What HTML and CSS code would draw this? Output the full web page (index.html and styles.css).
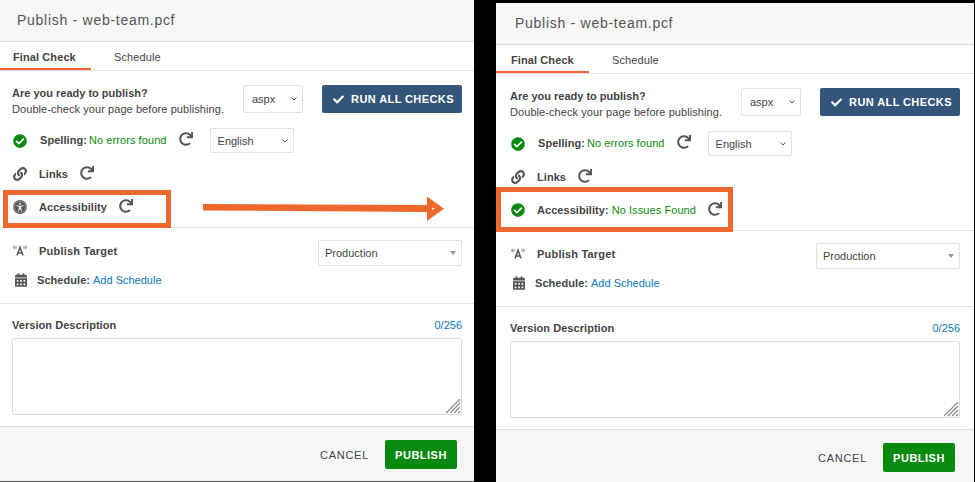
FILE: index.html
```html
<!doctype html>
<html lang="en">
<head>
	<meta charset="UTF-8">
	<title>Publish - web-team.pcf</title>
	<link rel="stylesheet" href="styles.css">
</head>
<body>
	<svg class="defs" width="0" height="0">
		<symbol id="i-ok" viewBox="0 0 512 512"><path d="M504 256c0 136.967-111.033 248-248 248S8 392.967 8 256 119.033 8 256 8s248 111.033 248 248zM227.314 387.314l184-184c6.248-6.248 6.248-16.379 0-22.627l-22.627-22.627c-6.248-6.249-16.379-6.249-22.628 0L216 308.118l-70.059-70.059c-6.248-6.248-16.379-6.248-22.628 0l-22.627 22.627c-6.248 6.248-6.248 16.379 0 22.627l104 104c6.249 6.249 16.379 6.249 22.628.001z"/></symbol>
		<symbol id="i-redo" viewBox="0 0 512 512"><path d="M500.33 0h-47.41a12 12 0 0 0-12 12.57l4 82.76A247.42 247.42 0 0 0 256 8C119.34 8 7.9 119.53 8 256.19 8.1 393.07 119.1 504 256 504a247.1 247.1 0 0 0 166.18-63.91 12 12 0 0 0 .48-17.43l-34-34a12 12 0 0 0-16.38-.55A176 176 0 1 1 402.1 157.8l-101.53-4.87a12 12 0 0 0-12.57 12v47.41a12 12 0 0 0 12 12h200.33a12 12 0 0 0 12-12V12a12 12 0 0 0-12-12z"/></symbol>
		<symbol id="i-check" viewBox="0 0 512 512"><path d="M173.898 439.404l-166.4-166.4c-9.997-9.997-9.997-26.206 0-36.204l36.203-36.204c9.997-9.998 26.207-9.998 36.204 0L192 312.69 432.095 72.596c9.997-9.997 26.207-9.997 36.204 0l36.203 36.204c9.997 9.997 9.997 26.206 0 36.204l-294.4 294.401c-9.998 9.997-26.207 9.997-36.204-.001z"/></symbol>
		<symbol id="i-link" viewBox="0 0 512 512"><path d="M326.612 185.391c59.747 59.809 58.927 155.698.36 214.59-.11.12-.24.25-.36.37l-67.2 67.2c-59.27 59.27-155.699 59.262-214.96 0-59.27-59.26-59.27-155.7 0-214.96l37.106-37.106c9.84-9.84 26.786-3.3 27.294 10.606.648 17.722 3.826 35.527 9.69 52.721 1.986 5.822.567 12.262-3.783 16.612l-13.087 13.087c-28.026 28.026-28.905 73.66-1.155 101.96 28.024 28.579 74.086 28.749 102.325.51l67.2-67.19c28.191-28.191 28.073-73.757 0-101.83-3.701-3.694-7.429-6.564-10.341-8.569a16.037 16.037 0 0 1-6.947-12.606c-.396-10.567 3.348-21.456 11.698-29.806l21.054-21.055c5.521-5.521 14.182-6.199 20.584-1.731a152.482 152.482 0 0 1 20.522 17.197zM467.547 44.449c-59.261-59.262-155.69-59.27-214.96 0l-67.2 67.2c-.12.12-.25.25-.36.37-58.566 58.892-59.387 154.781.36 214.59a152.454 152.454 0 0 0 20.521 17.196c6.402 4.468 15.064 3.789 20.584-1.731l21.054-21.055c8.35-8.35 12.094-19.239 11.698-29.806a16.037 16.037 0 0 0-6.947-12.606c-2.912-2.005-6.64-4.875-10.341-8.569-28.073-28.073-28.191-73.639 0-101.83l67.2-67.19c28.239-28.239 74.3-28.069 102.325.51 27.75 28.3 26.872 73.934-1.155 101.96l-13.087 13.087c-4.35 4.35-5.769 10.79-3.783 16.612 5.864 17.194 9.042 34.999 9.69 52.721.509 13.906 17.454 20.446 27.294 10.606l37.106-37.106c59.271-59.259 59.271-155.699.001-214.959z"/></symbol>
		<symbol id="i-cal" viewBox="0 0 448 512"><path d="M0 464c0 26.5 21.5 48 48 48h352c26.5 0 48-21.5 48-48V192H0v272zm320-196c0-6.6 5.4-12 12-12h40c6.6 0 12 5.4 12 12v40c0 6.6-5.4 12-12 12h-40c-6.6 0-12-5.4-12-12v-40zm0 128c0-6.6 5.4-12 12-12h40c6.6 0 12 5.4 12 12v40c0 6.6-5.4 12-12 12h-40c-6.6 0-12-5.4-12-12v-40zM192 268c0-6.6 5.4-12 12-12h40c6.6 0 12 5.4 12 12v40c0 6.6-5.4 12-12 12h-40c-6.6 0-12-5.4-12-12v-40zm0 128c0-6.6 5.4-12 12-12h40c6.6 0 12 5.4 12 12v40c0 6.6-5.4 12-12 12h-40c-6.6 0-12-5.4-12-12v-40zM64 268c0-6.6 5.4-12 12-12h40c6.6 0 12 5.4 12 12v40c0 6.6-5.4 12-12 12H76c-6.6 0-12-5.4-12-12v-40zm0 128c0-6.6 5.4-12 12-12h40c6.6 0 12 5.4 12 12v40c0 6.6-5.4 12-12 12H76c-6.6 0-12-5.4-12-12v-40zM400 64h-48V16c0-8.8-7.2-16-16-16h-32c-8.8 0-16 7.2-16 16v48H160V16c0-8.8-7.2-16-16-16h-32c-8.8 0-16 7.2-16 16v48H48C21.5 64 0 85.5 0 112v48h448v-48c0-26.5-21.5-48-48-48z"/></symbol>
		<symbol id="i-access" viewBox="0 0 14 14"><circle cx="7" cy="7" r="6.900"/><circle cx="7" cy="7" r="5.800" fill="none" stroke="#bbb" stroke-width=".5"/><path fill="#e8e8e8" d="M7 2.700a1 1 0 1 1 0 2 1 1 0 0 1 0-2zM3.500 5.200l-.2.700 2.500.8v1.500l-.9 3 .7.200L7 8.900l1.400 2.500.7-.2-.9-3V6.700l2.500-.8-.2-.7c-2.400.6-4.600.6-7 0z"/></symbol>
		<symbol id="i-target" viewBox="0 0 14 14"><path d="M4 11.500 7 3.200l3 8.300M5.100 9h3.800" fill="none" stroke="currentColor" stroke-width="1.500"/><path d="M1.700 1.800C.7 2.800.7 4.200 1.700 5.200M3.200 2.500C2.800 3 2.800 3.900 3.200 4.400M12.300 1.800c1 1 1 2.400 0 3.400M10.800 2.500c.4.500.4 1.400 0 1.900" fill="none" stroke="currentColor" stroke-width="1"/></symbol>
	</svg>

	<section class="panel panel-left">
		<header class="panel-head">Publish - web-team.pcf</header>
		<nav class="tabs">
			<a class="tab active">Final Check</a>
			<a class="tab">Schedule</a>
		</nav>
		<div class="checks">
			<div class="intro">
				<p class="intro-text"><b>Are you ready to publish?</b><br>Double-check your page before publishing.</p>
				<select class="pick pick-ext"><option>aspx</option></select>
				<button class="run"><svg class="ico-run"><use href="#i-check"/></svg>RUN ALL CHECKS</button>
			</div>
			<div class="check-row row-spell">
				<svg class="ico ok"><use href="#i-ok"/></svg>
				<span class="label">Spelling:</span>
				<span class="good">No errors found</span>
				<svg class="redo"><use href="#i-redo"/></svg>
				<select class="pick pick-lang"><option>English</option></select>
			</div>
			<div class="check-row">
				<svg class="ico"><use href="#i-link"/></svg>
				<span class="label">Links</span>
				<svg class="redo"><use href="#i-redo"/></svg>
			</div>
			<div class="check-row">
				<svg class="ico"><use href="#i-access"/></svg>
				<span class="label">Accessibility</span>
				<svg class="redo"><use href="#i-redo"/></svg>
			</div>
		</div>
		<div class="target">
			<div class="target-row">
				<svg class="ico"><use href="#i-target"/></svg>
				<span class="label">Publish Target</span>
				<div class="fake-select">Production</div>
			</div>
			<div class="sched-row">
				<svg class="ico-cal"><use href="#i-cal"/></svg>
				<span class="label">Schedule:</span>
				<a class="blue">Add Schedule</a>
			</div>
		</div>
		<div class="version">
			<div class="version-head"><span class="label">Version Description</span><span class="blue">0/256</span></div>
			<div class="desc-wrap">
				<textarea class="desc"></textarea>
				<svg class="grip" viewBox="0 0 15 15"><path d="M0 14 14 0M4 14 14 4M8 14l6-6M12 14l2-2" stroke="#888" stroke-width="1.200"/></svg>
			</div>
		</div>
		<footer class="panel-foot">
			<a class="cancel">CANCEL</a>
			<button class="publish">PUBLISH</button>
		</footer>
		<div class="callout callout-left"></div>
		<svg class="arrow" viewBox="0 0 242 26"><path d="M0 8 224 9V.5L241 12.700 224 25V16L0 14.500z" fill="#ee672c"/><path d="M229 11.500l3 1.300-3 1.200z" fill="#fff"/></svg>
	</section>

	<section class="panel panel-right">
		<header class="panel-head">Publish - web-team.pcf</header>
		<nav class="tabs">
			<a class="tab active">Final Check</a>
			<a class="tab">Schedule</a>
		</nav>
		<div class="checks">
			<div class="intro">
				<p class="intro-text"><b>Are you ready to publish?</b><br>Double-check your page before publishing.</p>
				<select class="pick pick-ext"><option>aspx</option></select>
				<button class="run"><svg class="ico-run"><use href="#i-check"/></svg>RUN ALL CHECKS</button>
			</div>
			<div class="check-row row-spell">
				<svg class="ico ok"><use href="#i-ok"/></svg>
				<span class="label">Spelling:</span>
				<span class="good">No errors found</span>
				<svg class="redo"><use href="#i-redo"/></svg>
				<select class="pick pick-lang"><option>English</option></select>
			</div>
			<div class="check-row">
				<svg class="ico"><use href="#i-link"/></svg>
				<span class="label">Links</span>
				<svg class="redo"><use href="#i-redo"/></svg>
			</div>
			<div class="check-row">
				<svg class="ico ok"><use href="#i-ok"/></svg>
				<span class="label">Accessibility:</span>
				<span class="good">No Issues Found</span>
				<svg class="redo"><use href="#i-redo"/></svg>
			</div>
		</div>
		<div class="target">
			<div class="target-row">
				<svg class="ico"><use href="#i-target"/></svg>
				<span class="label">Publish Target</span>
				<div class="fake-select">Production</div>
			</div>
			<div class="sched-row">
				<svg class="ico-cal"><use href="#i-cal"/></svg>
				<span class="label">Schedule:</span>
				<a class="blue">Add Schedule</a>
			</div>
		</div>
		<div class="version">
			<div class="version-head"><span class="label">Version Description</span><span class="blue">0/256</span></div>
			<div class="desc-wrap">
				<textarea class="desc"></textarea>
				<svg class="grip" viewBox="0 0 15 15"><path d="M0 14 14 0M4 14 14 4M8 14l6-6M12 14l2-2" stroke="#888" stroke-width="1.200"/></svg>
			</div>
		</div>
		<footer class="panel-foot">
			<a class="cancel">CANCEL</a>
			<button class="publish">PUBLISH</button>
		</footer>
		<div class="callout callout-right"></div>
	</section>
</body>
</html>
```

FILE: styles.css
```css
html, body{ margin: 0; height: 482px; overflow: hidden;}
body{ display: flex; background: #000; font-family: "Liberation Sans", Arial, sans-serif; font-size: 11px; color: #444;}
.defs{ position: absolute;}
p{ margin: 0;}

.panel{ position: relative; flex: none; width: 474px; height: 482px; background: #fff;}
.panel-left{ --pad: 12px; border-bottom: 1px solid #555; box-sizing: border-box;}
.panel-right{ --pad: 14px; width: 478px; height: 479px; margin: 3px 0 0 22px;}

.panel-head{ height: 41px; padding-left: calc(var(--pad) + 5px); line-height: 41px; background: #f7f7f7; border-bottom: 1px solid #ddd; font-size: 14px; letter-spacing: .72px; color: #555;}

.tabs{ display: flex; height: 28px; border-bottom: 1px solid #e0e0e0;}
.tab{ height: 28px; line-height: 30px; box-sizing: border-box; font-size: 11px; letter-spacing: .1px;}
.tab.active{ width: calc(var(--pad) + 79px); padding-left: calc(var(--pad) + 1px); border-bottom: 2px solid #f4623a; font-weight: bold;}
.tab + .tab{ margin-left: 23px;}

.checks{ height: 157px; padding: 14px var(--pad) 0; border-bottom: 1px solid #e0e0e0; box-sizing: border-box;}
.intro{ display: flex; height: 28px; margin-bottom: 15px;}
.intro-text{ width: 231px; line-height: 16px; letter-spacing: .07px;}
.intro-text b{ letter-spacing: 0;}

.pick{ appearance: none; font-family: "Liberation Sans", Arial, sans-serif; font-size: 11px; color: #444; border: 1px solid #e0e0e0; border-radius: 2px; background: #fff url("data:image/svg+xml,%3Csvg xmlns='http://www.w3.org/2000/svg' width='6' height='4'%3E%3Cpath d='M.5.5 3 3 5.500.5' fill='none' stroke='%23555'/%3E%3C/svg%3E") no-repeat right 5px center;}
.pick-ext{ width: 60px; height: 28px; padding-left: 8px;}
.pick-lang{ align-self: flex-start; width: 84px; height: 25px; margin-left: 17px; padding-left: 7px;}

.run{ display: flex; align-items: center; justify-content: center; width: 140px; height: 28px; margin-left: 19px; padding: 0 0 0 3px; border: 0; border-radius: 2px; background: #34557a; color: #fff; font-family: inherit; font-size: 11px; font-weight: bold; letter-spacing: .4px;}
.ico-run{ width: 11px; height: 11px; margin-right: 7px; fill: #fff;}

.check-row{ display: flex; align-items: center; height: 26px; margin-bottom: 7px; font-size: 11px;}
.row-spell{ height: 24px; margin-bottom: 9px;}
.ico{ flex: none; width: 14px; height: 14px; margin: 0 12px 0 1px; fill: #555; color: #555;}
.row-spell .ico{ margin: 2px 13px 0 1px;}
.ok{ fill: #088a0e;}
.label{ font-weight: bold; letter-spacing: .05px; color: #444;}
.good{ margin-left: 3px; letter-spacing: .08px; color: #0a8a0a;}
.row-spell .good{ margin-left: 2px;}
.redo{ flex: none; width: 14px; height: 14px; margin: -2px 0 0 12px; fill: #555;}

.target{ height: 76px; padding: 12px var(--pad) 0 calc(var(--pad) + 1px); border-bottom: 1px solid #e0e0e0; box-sizing: border-box;}
.target-row{ display: flex; align-items: center; height: 26px;}
.target-row .label{ margin-bottom: 4px; letter-spacing: .2px;}
.target-row .ico{ margin: 0 12px 4px 0;}
.fake-select{ position: relative; width: 144px; height: 26px; margin-left: auto; padding-left: 6px; line-height: 24px; box-sizing: border-box; background: #fff; border: 1px solid #e0e0e0; border-radius: 2px; font-size: 11px;}
.fake-select::after{ content: ""; position: absolute; right: 5px; top: 10px; border: 3px solid transparent; border-top: 4px solid #999;}

.sched-row{ display: flex; align-items: center; height: 20px; margin-top: 4px;}
.ico-cal{ flex: none; width: 12px; height: 14px; margin: 0 10px 0 2px; fill: #555;}
.blue{ color: #0a78bd;}
.sched-row .blue{ margin-left: 3px;}

.version{ height: 123px; padding: 14px var(--pad) 0; border-bottom: 1px solid #ddd; box-sizing: border-box;}
.version-head{ display: flex; justify-content: space-between; height: 14px; line-height: 14px; margin-bottom: 6px;}
.desc-wrap{ position: relative; height: 77px;}
.desc{ display: block; width: 100%; height: 77px; margin: 0; padding: 0; box-sizing: border-box; border: 1px solid #ddd; border-radius: 2px; resize: none; outline: none;}
.grip{ position: absolute; right: 1px; bottom: 1px; width: 15px; height: 15px;}

.panel-foot{ display: flex; align-items: center; justify-content: flex-end; height: 54px; padding: 1px calc(var(--pad) + 5px) 0 0; box-sizing: border-box; background: #f6f6f6;}
.cancel{ margin-right: 16px; font-size: 11px; letter-spacing: .72px; color: #444;}
.publish{ width: 72px; height: 29px; padding: 0; border: 0; border-radius: 2px; background: #088a0e; color: #fff; font-family: inherit; font-size: 11px; font-weight: bold; letter-spacing: .5px;}

/* annotations drawn over the screenshot */
.callout{ position: absolute; border: 5px solid #ee672c; box-sizing: border-box;}
.callout-left{ left: 3px; top: 190px; width: 168px; height: 38px;}
.callout-right{ left: 0; top: 184px; width: 237px; height: 45px;}
.arrow{ position: absolute; left: 203px; top: 196px; width: 242px; height: 26px;}
```
